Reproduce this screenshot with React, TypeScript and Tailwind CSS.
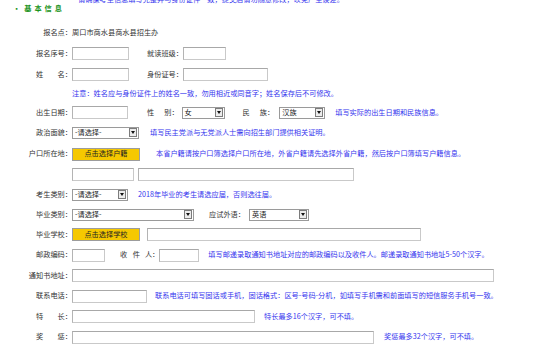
import type { ReactNode } from "react";

const blue = "text-[#3535ee]";

function Input({ w }: { w: string }) {
  return (
    <div
      className={`${w} h-[13px] bg-white border border-[#c9c9c9] border-t-[#a8a8a8] border-l-[#b4b4b4]`}
    />
  );
}

function Select({ w, value }: { w: string; value: string }) {
  return (
    <div
      className={`${w} h-[12px] bg-white border border-[#9a9a9a] flex items-center justify-between pl-[2px] pr-px`}
    >
      <span className="text-[#222]">{value}</span>
      <span className="w-[8px] h-[9px] bg-[#ececec] border border-[#7c7c7c] flex items-center justify-center">
        <svg width="4" height="3" viewBox="0 0 4 3">
          <path d="M0 0 H4 L2 3 Z" fill="#111" />
        </svg>
      </span>
    </div>
  );
}

function YellowButton({ text }: { text: string }) {
  return (
    <div className="w-[68px] h-[13px] bg-[#f5c800] border border-[#9c9c9c] flex items-center justify-center text-[#222]">
      {text}
    </div>
  );
}

function Row({ h, label, children }: { h: string; label: ReactNode; children?: ReactNode }) {
  return (
    <div className={`flex items-center ${h}`}>
      <div className="w-[72px] shrink-0 text-right whitespace-pre">{label}</div>
      {children}
    </div>
  );
}

export default function App() {
  return (
    <div className="w-[554px] h-[356px] overflow-hidden bg-white text-[7.2px] leading-none text-[#333] font-['Noto_Sans_CJK_SC',sans-serif]">
      <div className={`h-[8px] -mt-[4px] pl-[73px] flex items-center ${blue}`}>
        * 请确保考生信息填写完整并与身份证件一致，提交后请勿随意修改，以免产生误差。
      </div>
      <div className="h-[10px] flex items-center pl-[13px] text-[#1a931a] font-bold tracking-[3px]">
        <span className="mr-[1px]">·</span>基本信息
      </div>
      <div className="h-[9px]" />

      <Row h="h-[20px]" label="报名点：">
        <span>周口市商水县商水县招生办</span>
      </Row>

      <Row h="h-[21px]" label="报名序号：">
        <Input w="w-[57px]" />
        <span className="ml-[18px]">就读班级：</span>
        <Input w="w-[43px]" />
      </Row>

      <Row h="h-[21px]" label="姓　　名：">
        <Input w="w-[57px]" />
        <span className="ml-[18px]">身份证号：</span>
        <Input w="w-[85px]" />
      </Row>

      <Row h="h-[18px]" label="">
        <span className={blue}>注意：姓名应与身份证件上的姓名一致，勿用相近或同音字；姓名保存后不可修改。</span>
      </Row>

      <Row h="h-[19px]" label="出生日期：">
        <Input w="w-[56px]" />
        <span className="ml-[19px]">性</span>
        <span className="ml-[10px]">别：</span>
        <span className="ml-[3px]">
          <Select w="w-[43px]" value="女" />
        </span>
        <span className="ml-[18px]">民</span>
        <span className="ml-[10px]">族：</span>
        <span className="ml-[5px]">
          <Select w="w-[46px]" value="汉族" />
        </span>
        <span className={`ml-[10px] ${blue}`}>填写实际的出生日期和民族信息。</span>
      </Row>

      <Row h="h-[21px]" label="政治面貌：">
        <Select w="w-[67px]" value="-请选择-" />
        <span className={`ml-[11px] ${blue}`}>填写民主党派与无党派人士需向招生部门提供相关证明。</span>
      </Row>

      <Row h="h-[22px]" label="户口所在地：">
        <YellowButton text="点击选择户籍" />
        <span className={`ml-[16px] ${blue}`}>
          本省户籍请按户口簿选择户口所在地，外省户籍请先选择外省户籍，然后按户口簿填写户籍信息。
        </span>
      </Row>

      <Row h="h-[19px]" label="">
        <Input w="w-[62px]" />
        <span className="ml-[4px]">
          <Input w="w-[216px]" />
        </span>
      </Row>

      <Row h="h-[21px]" label="考生类别：">
        <Select w="w-[56px]" value="-请选择-" />
        <span className={`ml-[10px] ${blue}`}>2018年毕业的考生请选应届，否则选往届。</span>
      </Row>

      <Row h="h-[19px]" label="毕业类别：">
        <Select w="w-[122px]" value="-请选择-" />
        <span className="ml-[15px]">应试外语：</span>
        <span className="ml-[4px]">
          <Select w="w-[60px]" value="英语" />
        </span>
      </Row>

      <Row h="h-[21px]" label="毕业学校：">
        <YellowButton text="点击选择学校" />
        <span className="ml-[7px]">
          <Input w="w-[274px]" />
        </span>
      </Row>

      <Row h="h-[20px]" label="邮政编码：">
        <Input w="w-[33px]" />
        <span className="ml-[15px]">收</span>
        <span className="ml-[5.5px]">件</span>
        <span className="ml-[5px]">人：</span>
        <Input w="w-[40px]" />
        <span className={`ml-[9px] ${blue}`}>
          填写邮递录取通知书地址对应的邮政编码以及收件人。邮递录取通知书地址5-50个汉字。
        </span>
      </Row>

      <Row h="h-[21px]" label="通知书地址：">
        <Input w="w-[422px]" />
      </Row>

      <Row h="h-[20px]" label="联系电话：">
        <Input w="w-[75px]" />
        <span className={`ml-[8px] ${blue}`}>
          联系电话可填写固话或手机，固话格式：区号-号码-分机，如填写手机需和前面填写的短信服务手机号一致。
        </span>
      </Row>

      <Row h="h-[21px]" label="特　　长：">
        <Input w="w-[183px]" />
        <span className={`ml-[9px] ${blue}`}>特长最多16个汉字，可不填。</span>
      </Row>

      <Row h="h-[20px]" label="奖　　惩：">
        <Input w="w-[302px]" />
        <span className={`ml-[10px] ${blue}`}>奖惩最多32个汉字，可不填。</span>
      </Row>
    </div>
  );
}
